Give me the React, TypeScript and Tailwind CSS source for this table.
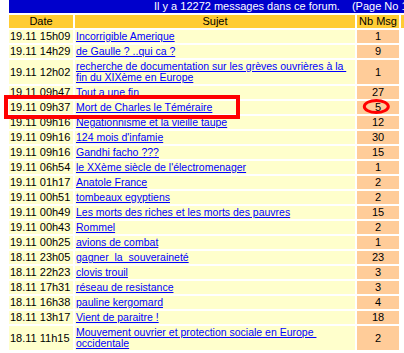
type Topic = {
  date: string;
  subject: string[];
  count: number;
};

const topics: Topic[] = [
  { date: "19.11 15h09", subject: ["Incorrigible Amerique"], count: 1 },
  { date: "19.11 14h29", subject: ["de Gaulle ? ..qui ca ?"], count: 9 },
  {
    date: "19.11 12h02",
    subject: [
      "recherche de documentation sur les grèves ouvrières à la\u00a0",
      "fin du XIXème en Europe",
    ],
    count: 1,
  },
  { date: "19.11 09h47", subject: ["Tout a une fin"], count: 27 },
  { date: "19.11 09h37", subject: ["Mort de Charles le Téméraire"], count: 5 },
  { date: "19.11 09h16", subject: ["Negationnisme et la vieille taupe"], count: 12 },
  { date: "19.11 09h16", subject: ["124 mois d'infamie"], count: 30 },
  { date: "19.11 09h16", subject: ["Gandhi facho ???"], count: 15 },
  { date: "19.11 06h54", subject: ["le XXème siècle de l'électromenager"], count: 1 },
  { date: "19.11 01h17", subject: ["Anatole France"], count: 2 },
  { date: "19.11 00h51", subject: ["tombeaux egyptiens"], count: 2 },
  {
    date: "19.11 00h49",
    subject: ["Les morts des riches et les morts des pauvres"],
    count: 15,
  },
  { date: "19.11 00h43", subject: ["Rommel"], count: 2 },
  { date: "19.11 00h25", subject: ["avions de combat"], count: 1 },
  { date: "18.11 23h05", subject: ["gagner  la  souveraineté"], count: 23 },
  { date: "18.11 22h23", subject: ["clovis trouil"], count: 3 },
  { date: "18.11 17h31", subject: ["réseau de resistance"], count: 3 },
  { date: "18.11 16h38", subject: ["pauline kergomard"], count: 4 },
  { date: "18.11 13h17", subject: ["Vient de paraitre !"], count: 18 },
  {
    date: "18.11 11h15",
    subject: [
      "Mouvement ouvrier et protection sociale en Europe\u00a0",
      "occidentale",
    ],
    count: 2,
  },
];

function TopicRow({ topic }: { topic: Topic }) {
  return (
    <tr>
      <td className="bg-[#ffffcc] px-px py-px whitespace-nowrap">{topic.date}</td>
      <td className="bg-[#ffffcc] px-px py-px">
        <a href="#" className="text-[10.5px] text-[#0000ff] underline whitespace-pre">
          {topic.subject.map((line, i) => (
            <span key={i}>
              {i > 0 && <br />}
              {line}
            </span>
          ))}
        </a>
      </td>
      <td className="bg-[#ffcc99] px-px py-px text-center">{topic.count}</td>
      <td></td>
    </tr>
  );
}

export default function App() {
  return (
    <div className="relative w-[404px] h-[353px] overflow-hidden bg-white font-['Liberation_Sans',Arial,sans-serif] text-[11px] leading-[11px] text-black">
      <table className="ml-[7px] -mt-[2px] w-[456px] table-fixed border-separate border-spacing-[2px]">
        <colgroup>
          <col className="w-[64px]" />
          <col className="w-[280px]" />
          <col className="w-[42px]" />
          <col className="w-[60px]" />
        </colgroup>
        <thead>
          <tr>
            <td colSpan={4} className="h-[13px] bg-[#0000cc] p-0 text-white whitespace-nowrap">
              <span className="pl-[145px]">Il y a 12272 messages dans ce forum.</span>
              <span className="ml-[12px]">(Page No 1/615)</span>
            </td>
          </tr>
          <tr>
            <td className="bg-[#ffcc33] py-px text-center">Date</td>
            <td className="bg-[#ffcc33] py-px text-center">Sujet</td>
            <td className="bg-[#ffcc33] py-px text-center whitespace-nowrap">Nb Msg</td>
            <td className="bg-[#ffcc33] py-px"></td>
          </tr>
        </thead>
        <tbody>
          {topics.map((t, i) => (
            <TopicRow key={i} topic={t} />
          ))}
        </tbody>
      </table>

      {/* annotation marks over the table */}
      <div className="absolute left-[4px] top-[95px] w-[236px] h-[24px] border-4 border-[#ff0000]" />
      <svg className="absolute left-0 top-0" width="404" height="353">
        <ellipse cx="376.3" cy="106.5" rx="12" ry="6" fill="none" stroke="#ff0000" strokeWidth="3" />
      </svg>
    </div>
  );
}
